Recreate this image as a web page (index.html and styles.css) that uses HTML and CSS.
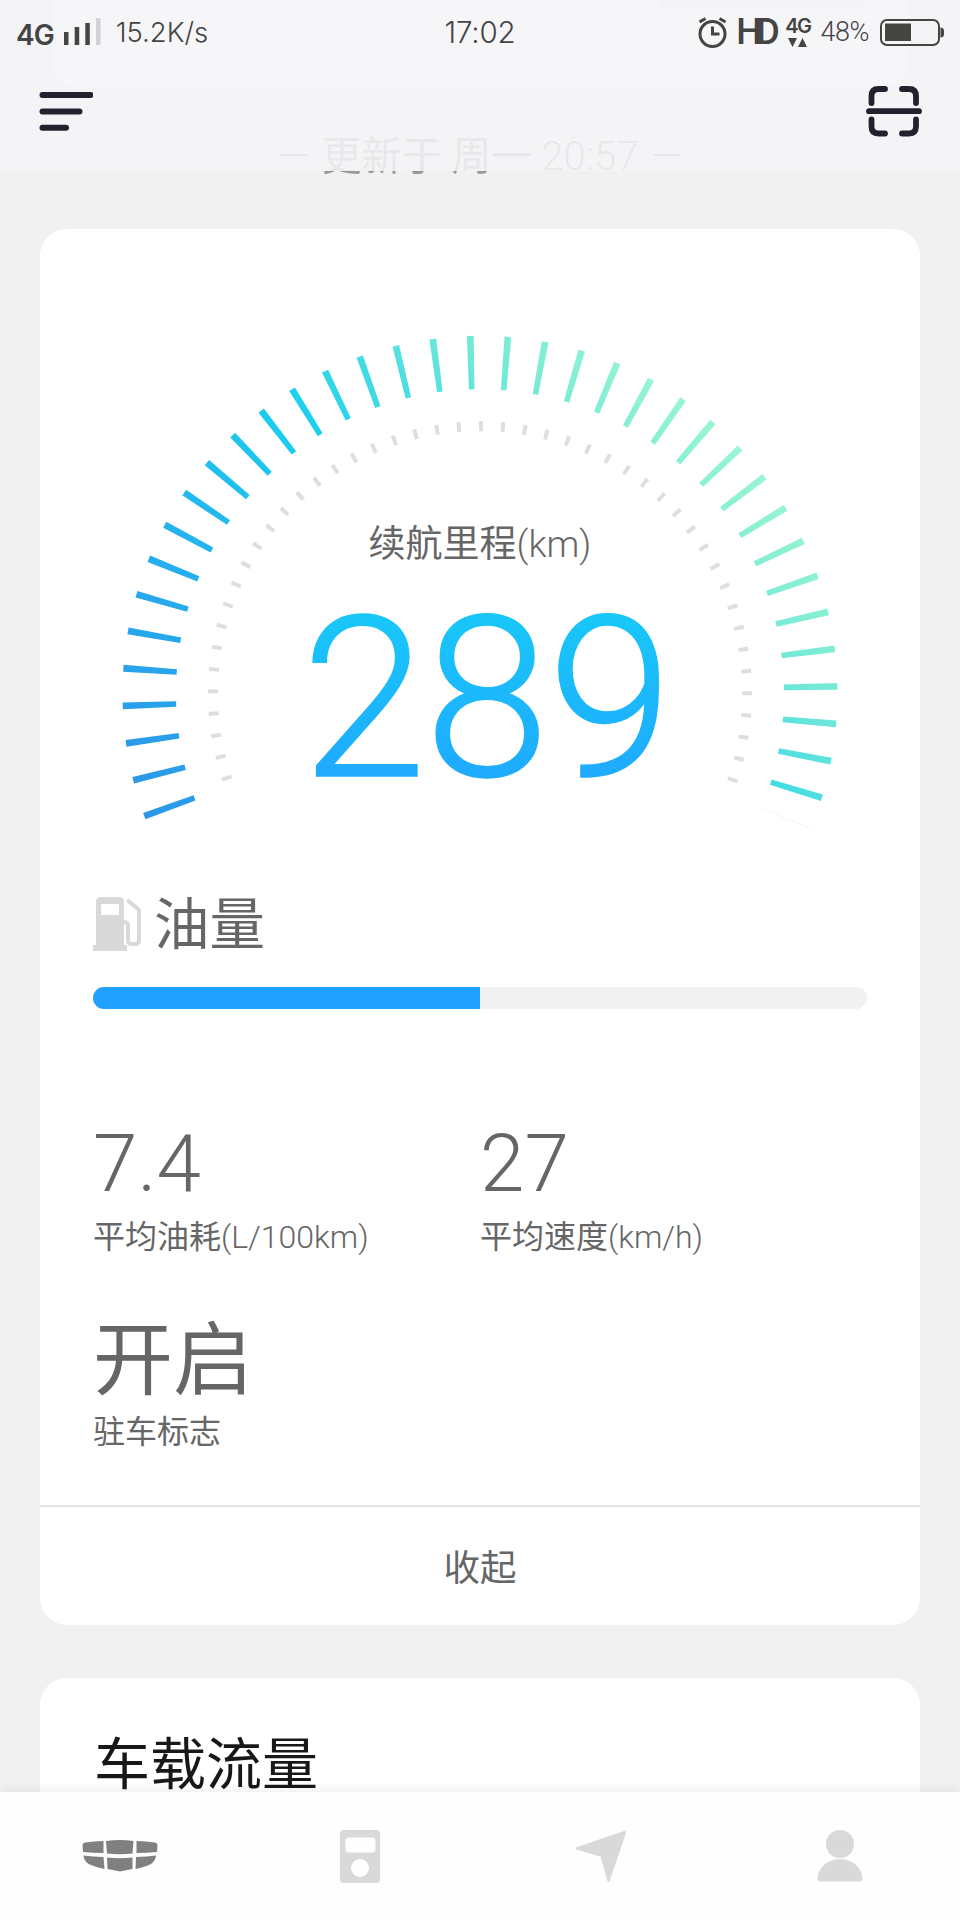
FILE: index.html
```html
<!DOCTYPE html>
<html lang="zh-CN">

<head>
    <meta charset="UTF-8">
    <meta name="viewport" content="width=device-width, initial-scale=1.0">
    <title>车况</title>
    <link rel="stylesheet" href="styles.css">
</head>

<body>
    <div class="screen">
        <main class="content">
            <section class="card prev-card"><span class="prev-btn"></span></section>
            <p class="updated"><i></i><span class="updated-text">更新于 周一 <span class="thin">20:57</span></span><i></i></p>

            <section class="card car-card">
                <svg class="gauge" viewBox="40 229 880 640">
                    <defs>
                        <linearGradient id="arcColor" gradientUnits="userSpaceOnUse" x1="236" y1="936" x2="746" y2="426">
                            <stop offset="0" stop-color="#2b94e8" />
                            <stop offset="0.3" stop-color="#26aeee" />
                            <stop offset="0.57" stop-color="#1acfee" />
                            <stop offset="0.8" stop-color="#70e8d8" />
                            <stop offset="1" stop-color="#a2f8cf" />
                        </linearGradient>
                        <linearGradient id="numColor" gradientUnits="userSpaceOnUse" x1="0" y1="608" x2="0" y2="778">
                            <stop offset="0" stop-color="#18c8f8" />
                            <stop offset="1" stop-color="#1faaff" />
                        </linearGradient>
                    </defs>
                    <g id="ticks" fill="url(#arcColor)"></g>
                    <g id="dots" fill="#dedede"></g>
                    <path d="M761.7 808.6L812 829" stroke="#f5f5f5" stroke-width="1" />
                    <text class="gauge-label" x="480" y="556.500" text-anchor="middle">续航里程<tspan class="thin">(km)</tspan></text>
                    <text class="gauge-num" x="301.500" y="775.500" textLength="371">289</text>
                </svg>

                <div class="fuel">
                    <svg width="48" height="54" viewBox="0 0 48 54">
                        <path fill="#d9d9d9" fill-rule="evenodd" d="M3 48V5q0-5 5-5H26q5 0 5 5V48H34V54H0V48ZM8 7V18H26V7Z" />
                        <path fill="none" stroke="#d9d9d9" stroke-width="4" stroke-linecap="round" stroke-linejoin="round" d="M35.500 4L46 13V43Q46 47 42 47H38.500Q35 47 35 43V29Q35 25 31 25" />
                    </svg>
                    <span class="fuel-name">油量</span>
                </div>
                <div class="progress"><div class="progress-bar" style="width: 50%"></div></div>

                <div class="stats">
                    <div class="stat">
                        <div class="value thin">7.4</div>
                        <div class="name">平均油耗<span class="thin">(L/100km)</span></div>
                    </div>
                    <div class="stat">
                        <div class="value thin">27</div>
                        <div class="name">平均速度<span class="thin">(km/h)</span></div>
                    </div>
                    <div class="stat">
                        <div class="value value-text">开启</div>
                        <div class="name">驻车标志</div>
                    </div>
                </div>
                <div class="collapse">收起</div>
            </section>

            <section class="card flow-card">
                <h2>车载流量</h2>
            </section>
        </main>

        <header class="header">
            <div class="status">
                <div class="status-left">
                    <b class="net">4G</b>
                    <svg width="37" height="28" viewBox="0 0 37 28" fill="#444">
                        <path d="M0 14h4.500v13H0zM10.700 9h4.500v18h-4.500zM21.300 5h4.500v22h-4.500z" />
                        <path fill="#d3d3d5" d="M32 0h4.500v27H32z" />
                    </svg>
                    <span class="speed">15.2K/s</span>
                </div>
                <span class="time">17:02</span>
                <div class="status-right">
                    <svg width="29" height="31" viewBox="0 0 29 31" fill="none" stroke="#444" stroke-width="3">
                        <circle cx="14.500" cy="17" r="12.500" />
                        <path d="M14.500 9.500V17H21.500M1.500 5L7.500 1.500M27.500 5L21.500 1.500" />
                    </svg>
                    <span class="hd">HD</span>
                    <span class="data"><b>4G</b>
                        <svg width="19" height="9" viewBox="0 0 19 9" fill="#444"><path d="M0 0H9L4.500 9ZM10 9H19L14.500 0Z" /></svg>
                    </span>
                    <span class="percent">48%</span>
                    <svg width="64" height="27" viewBox="0 0 64 27">
                        <rect x="1" y="1" width="58" height="25" rx="6" fill="none" stroke="#444" stroke-width="2" />
                        <rect x="5" y="4.500" width="26" height="17.500" fill="#444540" />
                        <path d="M60.500 8.500q3.500 0 3.500 3.500v3q0 3.500-3.500 3.500z" fill="#444" />
                    </svg>
                </div>
            </div>
            <div class="toolbar">
                <svg width="54" height="40" viewBox="0 0 54 40" fill="none" stroke="#22222e" stroke-width="6" stroke-linecap="round">
                    <path d="M3.500 4H51.500M3.500 20.500H40.500M3.500 36.700H27" />
                </svg>
                <svg width="56" height="52" viewBox="0 0 56 52" fill="none" stroke="#22222e" stroke-width="5.800" stroke-linecap="round">
                    <path d="M3 26.200H53M5.500 18V11Q5.500 4 12.500 4H19M36 4H43Q50 4 50 11V18M5.500 34.500V41.500Q5.500 48.500 12.500 48.500H19M36 48.500H43Q50 48.500 50 41.500V34.500" />
                </svg>
            </div>
        </header>

        <nav class="tabs">
            <div class="tab">
                <svg width="76" height="32" viewBox="0 0 76 32" fill="#808080">
                    <path d="M3 2.500Q12 1 21.500 1V13Q11 13 1 12L0.500 5Q0.500 3 3 2.500ZM24 1Q38-.8 51.500 1L50.500 13.500Q38 15 25 13.500ZM54.500 1Q64 1 73 2.500Q75.500 3 75.500 5L75 12Q65 13 54.500 13Z" />
                    <path d="M1.500 15.500Q11 16.500 21.500 17L22.500 29Q13 27 6.500 24Q2 21 1.500 15.500ZM25 17.500Q38 19 50.500 17.500V29L38 31.500L25.500 29ZM54 17Q65 16.500 74 15.500Q73.500 21 69 24Q63 27 53.500 29Z" />
                </svg>
            </div>
            <div class="tab">
                <svg width="41" height="53" viewBox="0 0 41 53" fill="#d9d9d9">
                    <path fill-rule="evenodd" d="M4 0H36Q40 0 40 4V49Q40 53 36 53H4Q0 53 0 49V4Q0 0 4 0ZM9 7.500Q5.500 7.500 5.500 11V19Q5.500 22.500 9 22.500H32Q35.500 22.500 35.500 19V11Q35.500 7.500 32 7.500ZM20 29A9 9 0 1 0 20 47A9 9 0 1 0 20 29Z" />
                </svg>
            </div>
            <div class="tab">
                <svg width="48" height="52" viewBox="0 0 48 52" fill="#d9d9d9" stroke="#d9d9d9" stroke-width="2.500" stroke-linejoin="round" overflow="visible">
                    <path d="M49 2L1 18.500L25.500 25.500L32.500 50.500Z" />
                </svg>
            </div>
            <div class="tab">
                <svg width="46" height="52" viewBox="0 0 46 52" fill="#d9d9d9">
                    <circle cx="23" cy="14" r="14" />
                    <path d="M0.500 49Q1 40 8 34Q15 29 23 29Q31 29 38 34Q45 40 45.500 49Q45.500 51.500 43.500 51.500H2.500Q0.500 51.500 0.500 49Z" />
                </svg>
            </div>
        </nav>
    </div>

    <script>
        // slightly tapered ticks around the gauge centre
        function drawTicks(id, count, start, step, outer, inner, wOuter, wInner) {
            var html = "";
            for (var i = 0; i < count; i++) {
                html += '<path d="' + tickPath(start + i * step, outer, inner, wOuter, wInner) + '"/>';
            }
            document.getElementById(id).innerHTML = html;
        }

        function tickPath(deg, outer, inner, wOuter, wInner) {
            var a = deg * Math.PI / 180;
            function point(r, offset) {
                var x = 480 + r * Math.sin(a) + offset * Math.cos(a);
                var y = 693.3 - r * Math.cos(a) + offset * Math.sin(a);
                return x.toFixed(2) + " " + y.toFixed(2);
            }
            return "M" + point(outer, -wOuter / 2) + "L" + point(outer, wOuter / 2)
                + "L" + point(inner, wInner / 2) + "L" + point(inner, -wInner / 2) + "Z";
        }

        drawTicks("ticks", 37, -110.1, 6.03, 357.5, 304, 6.8, 5.6);
        drawTicks("dots", 47, -108.5, 4.726, 272, 262, 4.2, 3.8);
    </script>
</body>

</html>
```
FILE: styles.css
```css
* {
    box-sizing: border-box;
}

body {
    margin: 0;
    background-color: #f0f0f0;
    font-family: Roboto, "Noto Sans CJK SC", sans-serif;
    color: #666;
}

svg {
    display: block;
    flex: none;
}

.thin {
    font-weight: 300;
}

.screen {
    position: relative;
    width: 960px;
    height: 1920px;
    overflow: hidden;
    background-color: #f1f1f1;
}

.content {
    padding: 0 40px;
}

.card {
    background-color: #fff;
    border-radius: 27px;
}

.prev-card {
    height: 88px;
    margin: 0 13px;
    border-radius: 0 0 26px 26px;
    display: flex;
    justify-content: flex-end;
}

.prev-btn {
    width: 206px;
    height: 10px;
    margin-right: 42px;
    border-radius: 0 0 18px 18px;
    background-color: #f0f0f0;
}

.updated {
    display: flex;
    justify-content: center;
    align-items: center;
    gap: 15px;
    height: 60px;
    margin: 37px 0 44px;
    font-size: 40px;
    line-height: 60px;
    color: #999;
}

.updated i {
    width: 27px;
    height: 2px;
    background-color: #999;
}

.updated-text {
    padding-top: 4px;
    white-space: nowrap;
}

.car-card {
    height: 1396px;
}

.gauge {
    width: 880px;
    height: 640px;
}

.gauge-label {
    font-size: 37px;
    fill: #666;
}

.gauge-num {
    font-size: 225px;
    font-weight: 300;
    fill: url(#numColor);
    stroke: url(#numColor);
    stroke-width: 1.5px;
}

.fuel {
    display: flex;
    align-items: center;
    gap: 13px;
    height: 54px;
    margin: 28px 53px 0;
    font-size: 55.500px;
    line-height: 54px;
}

.fuel-name {
    padding-top: 4px;
}

.progress {
    height: 22px;
    margin: 36px 53px 0;
    border-radius: 11px;
    background-color: #f1f1f1;
    overflow: hidden;
}

.progress-bar {
    height: 100%;
    background-color: #20a0ff;
}

.stats {
    display: grid;
    grid-template-columns: 387px 387px;
    row-gap: 62px;
    margin: 115px 53px 0;
}

.value {
    font-size: 80px;
    line-height: 80px;
}

.value-text {
    height: 80px;
    line-height: 84px;
}

.name {
    margin-top: 13px;
    font-size: 32px;
    line-height: 40px;
    white-space: nowrap;
}

.collapse {
    height: 120px;
    margin-top: 53px;
    padding-top: 3px;
    border-top: 2px solid #e3e3e3;
    font-size: 36.500px;
    line-height: 118px;
    text-align: center;
}

.flow-card {
    height: 300px;
    margin-top: 53px;
    padding: 57px 54px;
}

.flow-card h2 {
    margin: 0;
    font-size: 56px;
    line-height: 60px;
    font-weight: 400;
    color: #181818;
}

/* header sits over the scrolled content */
.header {
    position: absolute;
    top: 0;
    left: 0;
    width: 100%;
    height: 171px;
    background-color: rgba(244, 244, 247, 0.86);
}

.status {
    display: grid;
    grid-template-columns: 1fr auto 1fr;
    align-items: center;
    height: 64px;
    padding: 0 16px;
    color: #444;
    font-family: Inter, sans-serif;
    font-weight: 300;
}

.status-left,
.status-right {
    display: flex;
    align-items: center;
}

.status-right {
    justify-content: flex-end;
}

.net {
    margin: 5px 10px 0 0;
    font-size: 28px;
    font-weight: 600;
    letter-spacing: -1px;
}

.speed {
    margin-left: 15px;
    font-size: 27.500px;
}

.time {
    font-size: 29.500px;
    letter-spacing: -0.200px;
}

.hd {
    margin-left: 9px;
    font-size: 36px;
    font-weight: 500;
    font-family: Roboto, sans-serif;
    letter-spacing: -5.500px;
}

.data {
    display: flex;
    flex-direction: column;
    align-items: center;
    gap: 3px;
    margin: 0 10px 0 11px;
    font-size: 20px;
    line-height: 18px;
}

.data b {
    font-weight: 600;
    letter-spacing: -1.500px;
}

.percent {
    margin-right: 11px;
    font-size: 27px;
    font-family: Roboto, sans-serif;
    letter-spacing: -0.500px;
}

.toolbar {
    display: flex;
    justify-content: space-between;
    align-items: center;
    height: 94px;
    padding: 0 38px 0 39px;
}

.tabs {
    position: absolute;
    left: 0;
    bottom: 0;
    display: grid;
    grid-template-columns: repeat(4, 1fr);
    width: 100%;
    height: 128px;
    background-color: #fefefe;
    box-shadow: 0 -2px 10px rgba(0, 0, 0, 0.07);
}

.tab {
    display: flex;
    justify-content: center;
    align-items: center;
}
```
